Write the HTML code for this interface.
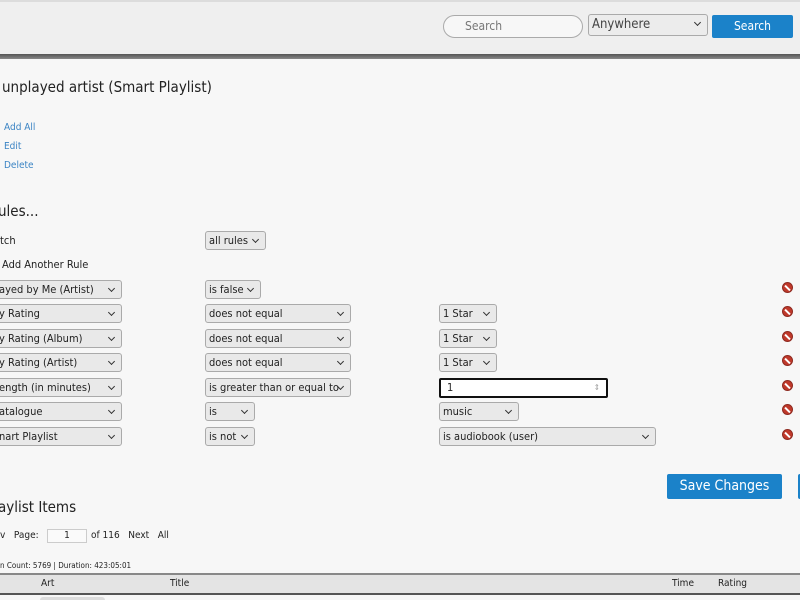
<!DOCTYPE html>
<html><head><meta charset="utf-8"><style>
*{box-sizing:border-box;margin:0;padding:0}
body{width:800px;height:600px;overflow:hidden;background:#f7f7f7;font-family:"DejaVu Sans Condensed","DejaVu Sans","Liberation Sans",sans-serif;font-stretch:condensed;color:#222;position:relative}
.a{position:absolute;white-space:nowrap}
#hdr{position:absolute;left:0;top:0;width:800px;height:54px;background:#efefef;border-top:2px solid #dcdcdc}
#bar{position:absolute;left:0;top:54px;width:800px;height:5px;background:linear-gradient(#555,#888)}
.sel{position:absolute;height:19px;border:1px solid #aaa;border-radius:3px;background:#e9e9e9;font-size:11px;line-height:18px;padding-left:3px;color:#222;white-space:nowrap;overflow:hidden}
.sel:after{content:"";position:absolute;right:7px;top:5px;width:4px;height:4px;border-right:1.5px solid #333;border-bottom:1.5px solid #333;transform:rotate(45deg)}
.del{position:absolute;left:782px;width:11px;height:11px;border-radius:50%;background:#c0392b;border:1px solid #8e2a20}
.del:after{content:"";position:absolute;left:1px;top:3.5px;width:7px;height:2px;background:#fff;transform:rotate(45deg)}
.lnk{color:#3b84c4;font-size:10px}
.btn{position:absolute;background:#1b82c9;color:#fff;border-radius:2px;text-align:center}
</style></head><body>
<div id="hdr"></div><div id="bar"></div>
<div class="a" style="left:443px;top:15px;width:140px;height:23px;border:1px solid #aaa;border-radius:12px;background:#f7f7f7;font-size:12px;color:#777;line-height:21px;padding-left:21px">Search</div>
<div class="sel" style="left:588px;top:14px;width:120px;height:22px;font-size:13px;line-height:20px;background:#ececec;color:#444">Anywhere</div>
<div class="btn" style="left:712px;top:15px;width:81px;height:23px;font-size:12px;line-height:23px">Search</div>

<div class="a" style="left:2px;top:78px;font-size:15px">unplayed artist (Smart Playlist)</div>
<div class="a lnk" style="left:4px;top:122px">Add All</div>
<div class="a lnk" style="left:4px;top:141px">Edit</div>
<div class="a lnk" style="left:4px;top:160px">Delete</div>
<div class="a" style="left:-2px;top:202px;font-size:15px">ules...</div>
<div class="a" style="left:0;top:234px;font-size:11px">tch</div>
<div class="sel" style="left:205px;top:231px;width:61px">all rules</div>
<div class="a" style="left:2px;top:258px;font-size:11px">Add Another Rule</div>

<div class="sel" style="left:-5px;top:280px;width:127px">ayed by Me (Artist)</div>
<div class="sel" style="left:205px;top:280px;width:56px">is false</div>
<div class="del" style="top:282px"></div>

<div class="sel" style="left:-5px;top:304px;width:127px">y Rating</div>
<div class="sel" style="left:205px;top:304px;width:146px">does not equal</div>
<div class="sel" style="left:439px;top:304px;width:58px">1 Star</div>
<div class="del" style="top:306px"></div>

<div class="sel" style="left:-5px;top:329px;width:127px">y Rating (Album)</div>
<div class="sel" style="left:205px;top:329px;width:146px">does not equal</div>
<div class="sel" style="left:439px;top:329px;width:58px">1 Star</div>
<div class="del" style="top:331px"></div>

<div class="sel" style="left:-5px;top:353px;width:127px">y Rating (Artist)</div>
<div class="sel" style="left:205px;top:353px;width:146px">does not equal</div>
<div class="sel" style="left:439px;top:353px;width:58px">1 Star</div>
<div class="del" style="top:355px"></div>

<div class="sel" style="left:-5px;top:378px;width:127px">ength (in minutes)</div>
<div class="sel" style="left:205px;top:378px;width:146px">is greater than or equal to</div>
<div class="a" style="left:439px;top:378px;width:169px;height:20px;border:2px solid #111;border-radius:2px;background:#fff;font-size:11px;line-height:16px;padding-left:6px">1<span style="position:absolute;right:6px;top:0;color:#999;font-size:8px">⇕</span></div>
<div class="del" style="top:380px"></div>

<div class="sel" style="left:-5px;top:402px;width:127px">atalogue</div>
<div class="sel" style="left:205px;top:402px;width:50px">is</div>
<div class="sel" style="left:439px;top:402px;width:80px">music</div>
<div class="del" style="top:404px"></div>

<div class="sel" style="left:-5px;top:427px;width:127px">nart Playlist</div>
<div class="sel" style="left:205px;top:427px;width:50px">is not</div>
<div class="sel" style="left:439px;top:427px;width:217px">is audiobook (user)</div>
<div class="del" style="top:429px"></div>

<div class="btn" style="left:667px;top:474px;width:115px;height:25px;font-size:14px;line-height:25px">Save Changes</div>
<div class="btn" style="left:798px;top:474px;width:10px;height:25px"></div>

<div class="a" style="left:-2px;top:498px;font-size:15px">aylist Items</div>
<div class="a" style="left:0;top:530px;font-size:10px">v &nbsp;&nbsp;Page:</div>
<div class="a" style="left:47px;top:529px;width:40px;height:14px;border:1px solid #ccc;background:#fafafa;font-size:10px;text-align:center;line-height:12px">1</div>
<div class="a" style="left:91px;top:530px;font-size:10px">of 116 &nbsp;&nbsp;Next &nbsp;&nbsp;All</div>
<div class="a" style="left:0;top:561px;font-size:8px">n Count: 5769 | Duration: 423:05:01</div>
<div class="a" style="left:0;top:573px;width:800px;height:22px;background:#e4e4e4;border-top:2px solid #888;border-bottom:2px solid #555"></div>
<div class="a" style="left:41px;top:578px;font-size:10px">Art</div>
<div class="a" style="left:170px;top:578px;font-size:10px">Title</div>
<div class="a" style="left:672px;top:578px;font-size:10px">Time</div>
<div class="a" style="left:718px;top:578px;font-size:10px">Rating</div>
<div class="a" style="left:40px;top:597px;width:65px;height:3px;background:#ddd;border-radius:3px 3px 0 0"></div>
</body></html>
